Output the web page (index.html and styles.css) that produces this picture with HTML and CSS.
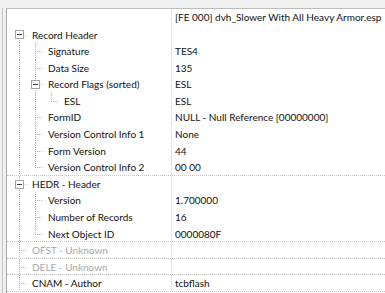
FILE: index.html
```html
<!DOCTYPE html>
<html lang="en">
  <head>
    <meta charset="UTF-8" />
    <meta name="viewport" content="width=device-width, initial-scale=1.0" />
    <title>Record View</title>
    <link rel="stylesheet" href="styles.css">
  </head>
  <body>
    <div class="panel">
      <div class="tree">
        <!-- column header -->
        <div class="row head">
          <div class="name"></div>
          <div class="value">[FE 000] dvh_Slower With All Heavy Armor.esp</div>
        </div>

        <!-- Record Header -->
        <div class="row">
          <div class="name"><span class="g first"><span class="box"></span></span><span class="label">Record Header</span></div>
          <div class="value"></div>
        </div>
        <div class="row">
          <div class="name"><span class="g pipe"></span><span class="g tee"></span><span class="label">Signature</span></div>
          <div class="value">TES4</div>
        </div>
        <div class="row">
          <div class="name"><span class="g pipe"></span><span class="g tee"></span><span class="label">Data Size</span></div>
          <div class="value">135</div>
        </div>
        <div class="row">
          <div class="name"><span class="g pipe"></span><span class="g tee"><span class="box"></span></span><span class="label">Record Flags (sorted)</span></div>
          <div class="value">ESL</div>
        </div>
        <div class="row">
          <div class="name"><span class="g pipe"></span><span class="g pipe"></span><span class="g ell"></span><span class="label">ESL</span></div>
          <div class="value">ESL</div>
        </div>
        <div class="row">
          <div class="name"><span class="g pipe"></span><span class="g tee"></span><span class="label">FormID</span></div>
          <div class="value">NULL - Null Reference [00000000]</div>
        </div>
        <div class="row">
          <div class="name"><span class="g pipe"></span><span class="g tee"></span><span class="label">Version Control Info 1</span></div>
          <div class="value">None</div>
        </div>
        <div class="row">
          <div class="name"><span class="g pipe"></span><span class="g tee"></span><span class="label">Form Version</span></div>
          <div class="value">44</div>
        </div>
        <div class="row sep">
          <div class="name"><span class="g pipe"></span><span class="g ell"></span><span class="label">Version Control Info 2</span></div>
          <div class="value">00 00</div>
        </div>

        <!-- HEDR -->
        <div class="row">
          <div class="name"><span class="g tee"><span class="box"></span></span><span class="label">HEDR - Header</span></div>
          <div class="value"></div>
        </div>
        <div class="row">
          <div class="name"><span class="g pipe"></span><span class="g tee"></span><span class="label">Version</span></div>
          <div class="value">1.700000</div>
        </div>
        <div class="row">
          <div class="name"><span class="g pipe"></span><span class="g tee"></span><span class="label">Number of Records</span></div>
          <div class="value">16</div>
        </div>
        <div class="row sep">
          <div class="name"><span class="g pipe"></span><span class="g ell"></span><span class="label">Next Object ID</span></div>
          <div class="value">0000080F</div>
        </div>

        <div class="row sep off">
          <div class="name"><span class="g tee"></span><span class="label">OFST - Unknown</span></div>
          <div class="value"></div>
        </div>
        <div class="row sep off">
          <div class="name"><span class="g tee"></span><span class="label">DELE - Unknown</span></div>
          <div class="value"></div>
        </div>
        <div class="row sep">
          <div class="name"><span class="g tee"></span><span class="label">CNAM - Author</span></div>
          <div class="value">tcbflash</div>
        </div>
      </div>
    </div>
  </body>
</html>
```

FILE: styles.css
```css
body {
  margin: 0;
  background: #f0f0f0;
  font-family: Lato, "Open Sans", sans-serif;
  font-size: 10px;
  color: #111;
  overflow: hidden;
}
.panel {
  margin: 8px 0 0 2px;
  padding-left: 3px;
  border-left: 1px solid #c4c4c4;
  height: 285px;
}
.tree {
  background: white;
  border-left: 1px solid #a9a9a9;
  border-top: 1px solid #bcbcbc;
  height: 100%;
}
.row {
  display: flex;
  height: 16.6px;
  line-height: 16.6px;
  white-space: nowrap;
  box-sizing: border-box;
}
.row.head {
  height: 17.5px;
  line-height: 17px;
}
.row.sep {
  border-bottom: 1px dotted #c6c6c6;
}
.name {
  width: 160px;
  flex-shrink: 0;
  display: flex;
  padding-left: 4px;
  border-right: 1px solid #e6e6e6;
}
.value {
  padding-left: 3px;
}
.label {
  padding-left: 5px;
}
.off .label {
  color: #a8a8a8;
}

/* tree guides, one cell per level */
.g {
  width: 16px;
  height: 100%;
  flex-shrink: 0;
  display: flex;
  align-items: center;
  padding-left: 4px;
  box-sizing: border-box;
  background-repeat: no-repeat;
}
.pipe {
  background-image: repeating-linear-gradient(to bottom, #b0b0b0 0 1px, transparent 1px 2px);
  background-size: 1px 100%;
  background-position: 8px 0;
}
.tee {
  background-image:
    repeating-linear-gradient(to bottom, #b0b0b0 0 1px, transparent 1px 2px),
    repeating-linear-gradient(to right, #b0b0b0 0 1px, transparent 1px 2px);
  background-size: 1px 100%, 11px 1px;
  background-position: 8px 0, 8px 8px;
}
.ell {
  background-image:
    repeating-linear-gradient(to bottom, #b0b0b0 0 1px, transparent 1px 2px),
    repeating-linear-gradient(to right, #b0b0b0 0 1px, transparent 1px 2px);
  background-size: 1px 9px, 11px 1px;
  background-position: 8px 0, 8px 8px;
}
.first {
  background-image:
    repeating-linear-gradient(to bottom, #b0b0b0 0 1px, transparent 1px 2px),
    repeating-linear-gradient(to right, #b0b0b0 0 1px, transparent 1px 2px);
  background-size: 1px 9px, 11px 1px;
  background-position: 8px 100%, 8px 8px;
}
.box {
  width: 9px;
  height: 9px;
  box-sizing: border-box;
  border: 1px solid #a4a4a4;
  background: white linear-gradient(#3c3c3c, #3c3c3c) no-repeat center / 5px 1px;
}
```
